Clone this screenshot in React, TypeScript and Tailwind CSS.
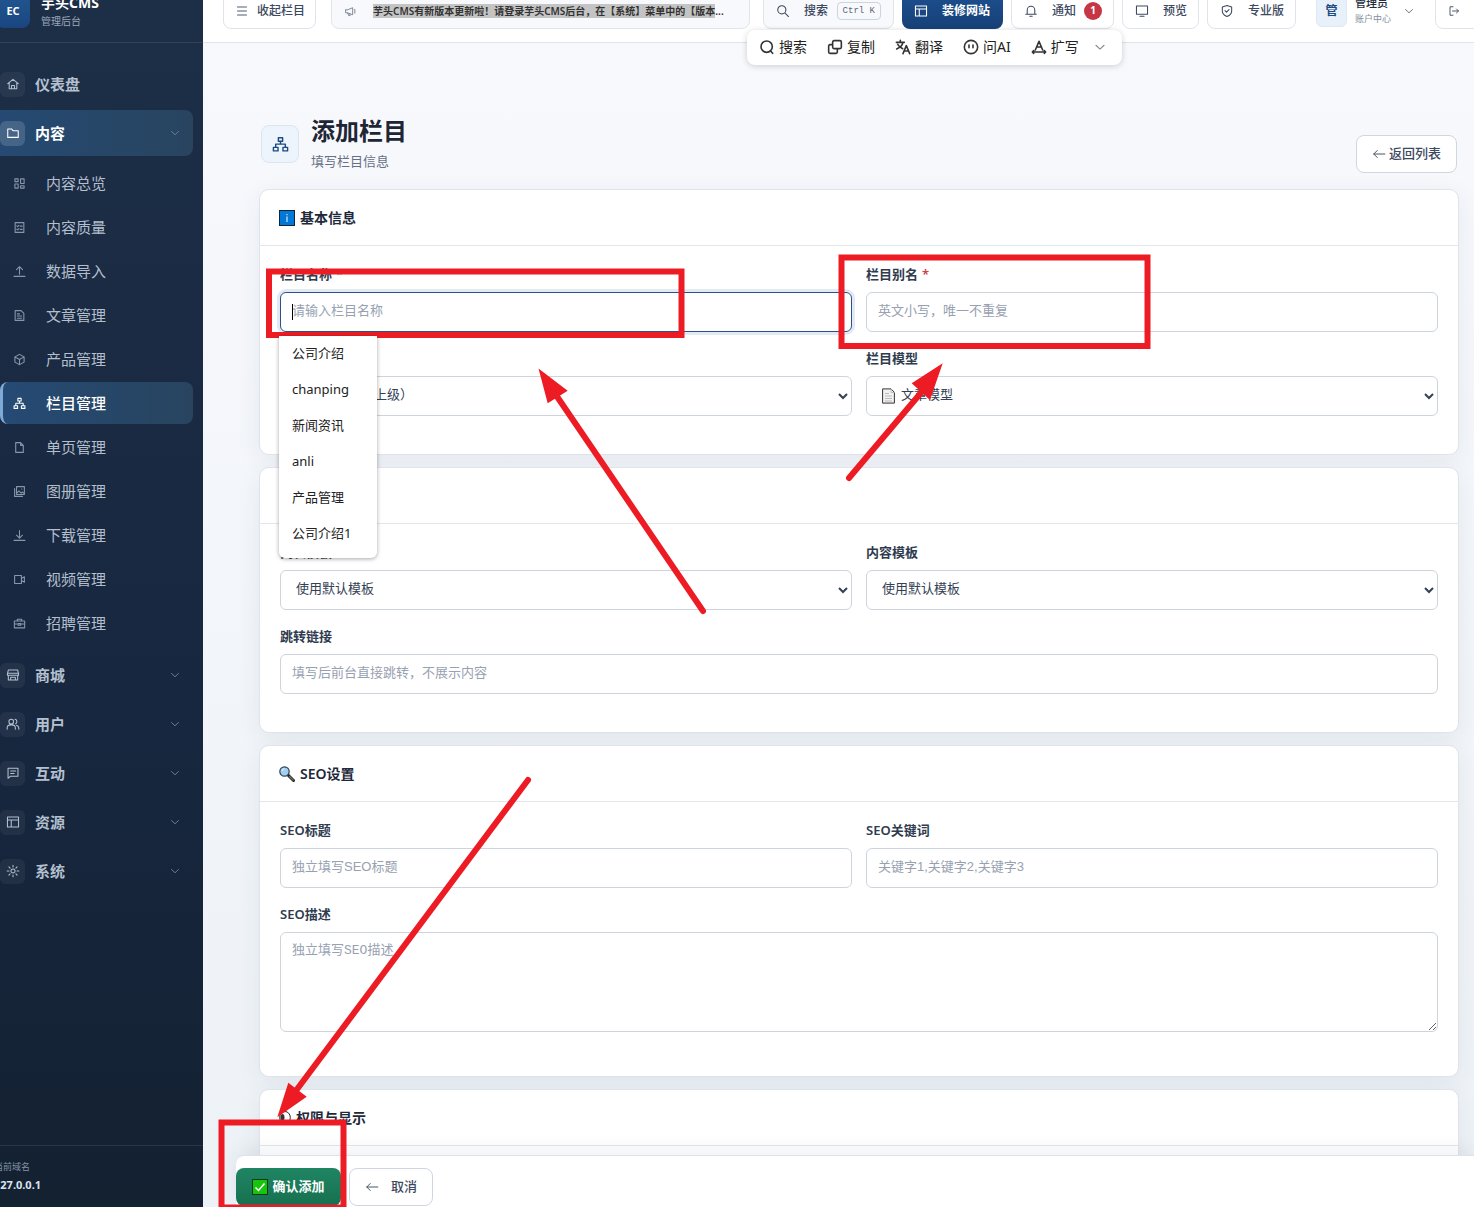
import type { ReactNode } from 'react'

const ICONS = {
  home: 'M3 11.5 12 4l9 7.5M5.5 10v10h13V10M9.500 20v-5.500h5V20',
  folder: 'M3 5h6.500l2.500 3h9v11.500H3z',
  dashboard: 'M3.500 3.500h6v5h-6zM14 3.500h6.500v8.500H14zM3.500 13h6v7.500h-6zM14 16h6.500v4.500H14z',
  quality: 'M4 3h16v18H4zM7 9l1.500 1.500L11 8M7 15l1.500 1.500L11 14M13.500 9.500H17M13.500 15.500H17',
  upload: 'M12 17V3M6.500 8.500 12 3l5.500 5.500M2 21h20',
  article: 'M4 3h11l5 5v13H4zM8 9h4M8 13h8M8 17h8',
  box: 'm12 2.500 8.500 4.700v9.600L12 21.500l-8.500-4.700V7.200zM3.500 7.200 12 12l8.500-4.800M12 12v9.500',
  sitemap: 'M9 2.500h6v5H9zM2 16h6.500v5H2zM15.500 16H22v5h-6.500zM12 7.500v4M5.200 16v-4.500h13.600V16',
  file: 'M5 3h9l5 5v13H5zM14 3v5h5',
  album: 'M6.500 3H21v14.500H6.500zM3 6.500V21h14.500M7 15l4-4 4 4 2-2 4 3M16 7.500h.5',
  download: 'M12 3v14M6.500 11.500 12 17l5.500-5.500M2 21h20',
  video: 'M3 4.500h12.500v15H3zM15.500 10l5.500-3v10l-5.500-3',
  briefcase: 'M2.500 7.500h19V20h-19zM8 7.500V4h8v3.500M2.500 13h7M14.500 13h7M9.500 12h5v3h-5z',
  store: 'M4 3.500h16l1.500 6v3h-19v-3zM4 12.500V20.500h16v-8M2.500 9h19M8 20v-4h8v4',
  users: 'M9 4a4 4 0 1 0 0 8 4 4 0 0 0 0-8M2 21v-2.500c0-3 3-5 7-5s7 2 7 5V21M15.500 4a4 4 0 0 1 1 7.500M18 14c2.500.8 4 2.500 4 5v2',
  message: 'M3.500 4h17v13.500H8l-4.500 3.500zM8 8.500h8.500M8 13h6',
  layout: 'M2.500 3.500h19v17h-19zM2.500 8.500h19M9 8.500v12',
  gear: 'M12 8.500a3.500 3.500 0 1 0 0 7 3.500 3.500 0 0 0 0-7M12 2v3M12 19v3M2 12h3M19 12h3M5 5l2 2M17 17l2 2M19 5l-2 2M7 17l-2 2',
  down: 'm5 9 7 6.500L19 9',
  menu: 'M3 4h18M3 12h18M3 20h18',
  horn: 'M3 9v5.500h3.500L16 18V5L6.500 9zM7 14.500l1.500 5h3l-1-4M20 8v7',
  search: 'M10 3a7 7 0 1 0 0 14 7 7 0 0 0 0-14M15.500 15.500 21.500 21.500',
  bell: 'M5.500 17V10.500a6.500 6.500 0 0 1 13 0V17M3 17.500h18M10 21h4',
  monitor: 'M2.500 3.500h19v14h-19zM8.500 21h7',
  shield: 'm12 2.500 8 2.500v7c0 5-4 8-8 9.500C8 20 4 17 4 12V5zM8.500 11.500l2.500 2.500 4.500-4.500',
  exit: 'M10 3.500H4v17h6M9 12h12M17 8l4 4-4 4',
  left: 'M22 12H3M9 6l-6 6 6 6',
  find: 'M11.500 3a8.500 8.500 0 1 0 0 17 8.500 8.500 0 0 0 0-17M17 17.500l3.500 4',
  copy: 'M10.500 2.500h9a2 2 0 0 1 2 2v8a2 2 0 0 1-2 2h-9a2 2 0 0 1-2-2v-8a2 2 0 0 1 2-2M8.500 8.500h-4a2 2 0 0 0-2 2v9a2 2 0 0 0 2 2h9a2 2 0 0 0 2-2v-5',
  translate: 'M2 5h12M8 2v3M12 5c-1 5-5 8-9.500 10M4 8c2 3.500 4.500 5 7.500 6.500M12 22l5-12 5 12M13.500 18h7',
  ask: 'M12 2a10 10 0 1 0 0 20 10 10 0 0 0 0-20M9 9v4M15 9v4',
  expand: 'm6.500 16.500 5.500-13 5.500 13M9 12h6M2 19.500h20M4 17.500l-2 2 2 2M20 17.500l2 2-2 2',
}

type IconName = keyof typeof ICONS

function Icon({ name, className = 'size-3.5', width = 1.8 }: { name: IconName; className?: string; width?: number }) {
  return (
    <svg viewBox="0 0 24 24" fill="none" stroke="currentColor" strokeWidth={width} strokeLinejoin="round" strokeLinecap="round" className={`shrink-0 ${className}`} aria-hidden="true">
      <path d={ICONS[name]} />
    </svg>
  )
}

const subItems: { icon: IconName; label: string }[] = [
  { icon: 'dashboard', label: '内容总览' },
  { icon: 'quality', label: '内容质量' },
  { icon: 'upload', label: '数据导入' },
  { icon: 'article', label: '文章管理' },
  { icon: 'box', label: '产品管理' },
  { icon: 'sitemap', label: '栏目管理' },
  { icon: 'file', label: '单页管理' },
  { icon: 'album', label: '图册管理' },
  { icon: 'download', label: '下载管理' },
  { icon: 'video', label: '视频管理' },
  { icon: 'briefcase', label: '招聘管理' },
]

const groups: { icon: IconName; label: string }[] = [
  { icon: 'store', label: '商城' },
  { icon: 'users', label: '用户' },
  { icon: 'message', label: '互动' },
  { icon: 'layout', label: '资源' },
  { icon: 'gear', label: '系统' },
]

const suggestions = ['公司介绍', 'chanping', '新闻资讯', 'anli', '产品管理', '公司介绍1']

const tools: { icon: IconName; label: string }[] = [
  { icon: 'find', label: '搜索' },
  { icon: 'copy', label: '复制' },
  { icon: 'translate', label: '翻译' },
  { icon: 'ask', label: '问AI' },
  { icon: 'expand', label: '扩写' },
]

function NavGroup({ icon, label, active, arrow = true }: { icon: IconName; label: string; active?: boolean; arrow?: boolean }) {
  return (
    <a
      href="#"
      className={`flex h-[46px] items-center rounded-lg pr-3 pl-3 text-[15px] font-bold ${active ? 'bg-linear-to-r from-[#254a74] to-[#28445f] text-white' : 'text-[#b4c0cf]'}`}
    >
      <span className={`mr-2.5 flex size-[25px] items-center justify-center rounded-md ${active ? 'bg-white/15' : 'bg-white/5'}`}>
        <Icon name={icon} />
      </span>
      {label}
      {arrow && <Icon name="down" className="ml-auto size-3 text-[#71859d]" />}
    </a>
  )
}

function Sidebar() {
  return (
    <aside className="flex w-[203px] shrink-0 flex-col overflow-hidden bg-linear-to-b from-[#1d2e47] via-[#17273f] via-60% to-[#132131]">
      <div className="-mt-5 flex h-[63px] shrink-0 items-center border-b border-[#31435a]">
        <span className="-ml-1 flex size-[34px] items-center justify-center rounded-lg bg-linear-to-b from-[#215791] to-[#1a4680] text-[11px] font-bold text-white">EC</span>
        <div className="ml-[11px]">
          <div className="text-sm leading-5 font-bold text-white">芋头CMS</div>
          <div className="text-[10px] leading-4 text-[#9aa8ba]">管理后台</div>
        </div>
      </div>
      <nav className="-ml-3 flex flex-1 flex-col pt-[18px] pr-2.5">
        <NavGroup icon="home" label="仪表盘" arrow={false} />
        <div className="mt-[3px]">
          <NavGroup icon="folder" label="内容" active />
        </div>
        <ul className="mt-1.5 mb-2 ml-3 flex flex-col gap-0.5">
          {subItems.map((item) => {
            const active = item.label === '栏目管理'
            return (
              <li key={item.label}>
                <a
                  href="#"
                  className={`flex h-[42px] items-center gap-5 rounded-lg border-l-3 pl-2.5 text-[15px] ${active ? 'border-[#7fa9d6] bg-linear-to-r from-[#254a74] to-[#28445f] font-medium text-white' : 'border-transparent text-[#b3bfcd]'}`}
                >
                  <Icon name={item.icon} className={`size-[13px] ${active ? '' : 'text-[#8797aa]'}`} width={2} />
                  {item.label}
                </a>
              </li>
            )
          })}
        </ul>
        <div className="flex flex-col gap-[3px]">
          {groups.map((g) => (
            <NavGroup key={g.label} icon={g.icon} label={g.label} />
          ))}
        </div>
      </nav>
      <div className="h-[62px] shrink-0 border-t border-[#26374a] pt-[13px]">
        <div className="-ml-1.5">
          <div className="text-[9px] leading-4 text-[#8292a5]">当前域名</div>
          <div className="text-[11px] leading-5 font-bold text-[#dce4ee]">127.0.0.1</div>
        </div>
      </div>
    </aside>
  )
}

const topButton = 'flex h-9 shrink-0 items-center whitespace-nowrap rounded-lg border border-[#dfe3ea] px-3 text-xs font-medium text-[#3c4960]'

function TopBar() {
  return (
    <header className="-mt-5 flex h-[63px] shrink-0 items-center overflow-hidden border-b border-[#dfe3ea] bg-white pl-5">
      <button className={`${topButton} gap-[9px] pr-2.5`}>
        <Icon name="menu" className="size-3" />
        收起栏目
      </button>
      <div className="mr-[13px] ml-[15px] flex h-9 min-w-0 flex-1 items-center rounded-lg border border-[#e1e5eb] bg-[#f8f9fc] pr-3 pl-3">
        <Icon name="horn" className="mr-4 size-[13px] text-[#7d8795]" />
        <p className="truncate text-[10px] leading-4 font-semibold text-[#333]">
          <span className="bg-[#c4c4c4]">芋头CMS有新版本更新啦！请登录芋头CMS后台，在【系统】菜单中的【版本</span>...
        </p>
      </div>
      <div className="flex shrink-0 items-center gap-2">
        <button className={`${topButton} w-[131px] bg-[#f8f9fc]`}>
          <Icon name="search" className="size-3.5" />
          <span className="ml-[14px]">搜索</span>
          <kbd className="ml-auto rounded border border-[#ccd4df] px-[5px] font-['Liberation_Mono',monospace] text-[9px] leading-4 text-[#5d6a7e]">Ctrl K</kbd>
        </button>
        <button className="flex h-9 w-[101px] items-center gap-[14px] rounded-lg bg-linear-to-b from-[#1d4f8f] to-[#174077] px-3 text-xs font-bold whitespace-nowrap text-white">
          <Icon name="layout" />
          装修网站
        </button>
        <button className={`${topButton} w-[103px]`}>
          <Icon name="bell" />
          <span className="ml-[14px]">通知</span>
          <span className="ml-2 flex size-[18px] shrink-0 items-center justify-center rounded-full bg-[#c53744] text-[10px] font-bold text-white">1</span>
        </button>
        <button className={`${topButton} w-[77px] gap-[14px]`}>
          <Icon name="monitor" />
          预览
        </button>
        <button className={`${topButton} w-[89px] gap-[14px]`}>
          <Icon name="shield" />
          专业版
        </button>
        <button className="flex w-[123px] items-center pl-3 text-left">
          <span className="flex size-[31px] items-center justify-center rounded-md border border-[#dce8f4] bg-[#e8f1fa] text-xs font-bold text-[#1c4a82]">管</span>
          <span className="ml-2">
            <span className="block text-[11px] leading-4 font-medium text-[#222c3b]">管理员</span>
            <span className="block text-[9px] leading-4 text-[#8690a0]">账户中心</span>
          </span>
          <Icon name="down" className="ml-3 size-3 text-[#5d6878]" />
        </button>
        <button aria-label="退出" className={`${topButton} -mr-3 w-[51px]`}>
          <Icon name="exit" className="size-3" />
        </button>
      </div>
    </header>
  )
}

function Card({ icon, title, children }: { icon: ReactNode; title: string; children?: ReactNode }) {
  return (
    <section className="rounded-[10px] border border-[#e0e4ea] bg-white shadow-[0_6px_24px_rgba(30,50,80,0.07)]">
      <h2 className="flex h-14 items-center gap-[5px] border-b border-[#e3e6eb] px-[19px] text-sm font-semibold text-[#1e293b]">
        {icon}
        {title}
      </h2>
      <div className="grid grid-cols-2 gap-x-3.5 gap-y-4 px-5 pt-[18px] pb-[38px]">{children}</div>
    </section>
  )
}

const control = "block h-10 w-full rounded-md border border-[#ced4dc] bg-white px-[11px] pb-1 font-['Liberation_Sans','Noto_Sans_CJK_SC',sans-serif] text-[13px] text-[#334155] placeholder:text-[#97a1b1]"

function Field({ id, label, required, wide, children }: { id: string; label: string; required?: boolean; wide?: boolean; children: ReactNode }) {
  return (
    <div className={wide ? 'col-span-2' : ''}>
      <label htmlFor={id} className="mb-2 block h-5 text-[13px] leading-5 font-semibold text-[#2f3b4e]">
        {label}
        {required && <span className="ml-1 text-[#d0404a]">*</span>}
      </label>
      {children}
    </div>
  )
}

function InfoIcon() {
  return (
    <svg viewBox="0 0 16 16" className="size-4 shrink-0" aria-hidden="true">
      <rect x=".5" y=".5" width="15" height="15" fill="#0078d7" stroke="#12243a" />
      <path d="M8 6.500v5.500M8 4v1.200" stroke="#fff" />
    </svg>
  )
}

function PaletteIcon() {
  return (
    <svg viewBox="0 0 16 16" className="size-4 shrink-0" aria-hidden="true">
      <circle cx="8" cy="8" r="7" fill="#e9b872" stroke="#333" />
      <circle cx="5" cy="6" r="1.300" fill="#e81224" />
      <circle cx="10" cy="5" r="1.300" fill="#0078d7" />
    </svg>
  )
}

function MagnifierIcon() {
  return (
    <svg viewBox="0 0 16 16" className="size-4 shrink-0" aria-hidden="true">
      <path d="m9 9 5.500 5.500" stroke="#222" strokeWidth="3" strokeLinecap="round" />
      <path d="m10.500 10.500 3.700 3.700" stroke="#777" strokeWidth="1.200" strokeLinecap="round" />
      <circle cx="5.500" cy="5.500" r="4.700" fill="#9fd0f2" stroke="#33414f" strokeWidth="1.200" />
      <path d="M3 5a2.500 2.500 0 0 1 2.500-2.200" stroke="#e4f4ff" fill="none" />
    </svg>
  )
}

function EyeIcon() {
  return (
    <svg viewBox="0 0 12 16" className="h-4 w-3 shrink-0" aria-hidden="true">
      <ellipse cx="6" cy="7.500" rx="5.300" ry="6" fill="#fff" stroke="#222" />
      <ellipse cx="3.500" cy="7.500" rx="2" ry="3.500" fill="#333" />
    </svg>
  )
}

function PageIcon() {
  return (
    <svg viewBox="0 0 13 16" className="pointer-events-none absolute top-3 left-4 h-4 w-[13px]" aria-hidden="true">
      <path d="M.6.900h8.400l3.400 3.400v10.800H.6z" fill="#f2f2f2" stroke="#333" />
      <path d="M9 1v3.500h3.400M3 5.500h4M3 8h7M3 10.500h7M3 13h7" stroke="#bbb" fill="none" />
    </svg>
  )
}

function CheckIcon() {
  return (
    <svg viewBox="0 0 16 16" className="size-4 shrink-0" aria-hidden="true">
      <rect x=".5" y=".5" width="15" height="15" fill="#16c60c" stroke="#10361c" />
      <path d="m3.500 8.500 3 3 6-7" stroke="#fff" strokeWidth="1.500" fill="none" />
    </svg>
  )
}

function FloatingTools() {
  return (
    <div className="absolute top-[30px] left-[747px] flex h-[35px] w-[375px] items-center gap-5 rounded-lg bg-white pb-0.5 pl-3 text-sm text-[#222] shadow-[0_1px_6px_rgba(0,0,0,0.18)]">
      {tools.map((t) => (
        <button key={t.label} className="flex shrink-0 items-center gap-1">
          <Icon name={t.icon} className="size-4 text-[#333]" width={2.4} />
          {t.label}
        </button>
      ))}
      <button aria-label="更多" className="-ml-1.5">
        <Icon name="down" className="size-3.5 text-[#888]" />
      </button>
    </div>
  )
}

// Red boxes and arrows of the tutorial
function Annotations() {
  return (
    <svg className="pointer-events-none absolute inset-0 size-full" fill="none" stroke="#ed1c24" strokeWidth="6" strokeLinecap="round" aria-hidden="true">
      <rect x="269" y="271.500" width="412.500" height="63.500" strokeLinecap="butt" />
      <rect x="841.500" y="257.500" width="306" height="88.500" />
      <rect x="221.500" y="1122.500" width="122" height="85" />
      <path d="M703 611 556 395M849 478l76-90M528 780 295 1092" />
      <path d="m538.500 368.500 29.200 22.200-20 12.600zM942.700 363.300l-31 20 18.300 16.700zM277.300 1117.300l11-34.600 18.400 14z" fill="#ed1c24" stroke="none" />
    </svg>
  )
}

export default function App() {
  return (
    <div className="relative flex h-screen overflow-hidden bg-[#f7f8fc] font-['Noto_Sans','Noto_Sans_CJK_SC',sans-serif]">
      <Sidebar />
      <div className="relative flex min-w-0 flex-1 flex-col overflow-hidden bg-linear-to-b from-[#f8f9fd] to-[#edf2f6]">
        <TopBar />
        <main className="min-h-0 flex-1 overflow-hidden pt-[70px] pr-[15px] pl-14">
          <div className="mb-4 flex items-end justify-between px-0.5">
            <div className="flex items-center">
              <span className="mt-0.5 mr-3 flex size-[38px] items-center justify-center rounded-lg border border-[#dbe5f0] bg-[#edf4fb] text-[#1c4a82]">
                <Icon name="sitemap" className="size-[17px]" width={2} />
              </span>
              <div>
                <h1 className="text-2xl leading-9 font-bold text-[#1e2635]">添加栏目</h1>
                <p className="text-[13px] leading-6 text-[#667085]">填写栏目信息</p>
              </div>
            </div>
            <button className="flex h-[38px] items-center gap-[3px] rounded-lg border border-[#d0d6df] bg-white px-[15px] text-[13px] font-medium text-[#3c4960]">
              <Icon name="left" className="size-3.5" width={1.6} />
              返回列表
            </button>
          </div>

          <form className="flex flex-col gap-3">
            <Card icon={<InfoIcon />} title="基本信息">
              <Field id="name" label="栏目名称" required>
                <div className="relative">
                  <input id="name" autoComplete="off" placeholder="请输入栏目名称" className={`${control} border-[#2b5288]! shadow-[0_0_0_3px_#e2ebf5]`} />
                  <span className="absolute top-3 left-3 h-4 w-px bg-black" />
                  <ul className="absolute top-full -left-px z-10 mt-1 w-[98px] rounded-b-md bg-white pb-1.5 text-[13px] text-[#222] shadow-[0_1px_4px_rgba(0,0,0,0.35)]">
                    {suggestions.map((s) => (
                      <li key={s} className="flex h-9 items-center pl-[13px]">{s}</li>
                    ))}
                  </ul>
                </div>
              </Field>
              <Field id="alias" label="栏目别名" required>
                <input id="alias" placeholder="英文小写，唯一不重复" className={control} />
              </Field>
              <Field id="parent" label="上级栏目">
                <select id="parent" className={control}>
                  <option>顶级栏目（无上级）</option>
                </select>
              </Field>
              <Field id="model" label="栏目模型">
                <div className="relative">
                  <select id="model" className={`${control} pl-[30px]`}>
                    <option>文章模型</option>
                  </select>
                  <PageIcon />
                </div>
              </Field>
            </Card>

            <Card icon={<PaletteIcon />} title="模板设置">
              <Field id="list-tpl" label="列表模板">
                <select id="list-tpl" className={control}>
                  <option>使用默认模板</option>
                </select>
              </Field>
              <Field id="content-tpl" label="内容模板">
                <select id="content-tpl" className={control}>
                  <option>使用默认模板</option>
                </select>
              </Field>
              <Field id="link" label="跳转链接" wide>
                <input id="link" placeholder="填写后前台直接跳转，不展示内容" className={control} />
              </Field>
            </Card>

            <Card icon={<MagnifierIcon />} title="SEO设置">
              <Field id="seo-title" label="SEO标题">
                <input id="seo-title" placeholder="独立填写SEO标题" className={control} />
              </Field>
              <Field id="seo-keys" label="SEO关键词">
                <input id="seo-keys" placeholder="关键字1,关键字2,关键字3" className={control} />
              </Field>
              <Field id="seo-desc" label="SEO描述" wide>
                <textarea
                  id="seo-desc"
                  placeholder="独立填写SEO描述"
                  className="mb-1.5 block h-[100px] w-full rounded-md border border-[#ced4dc] bg-white px-[11px] py-2 font-['Liberation_Mono','Noto_Sans_CJK_SC',monospace] text-[13px] leading-5 placeholder:text-[#97a1b1]"
                />
              </Field>
            </Card>

            <Card icon={<EyeIcon />} title="权限与显示" />
          </form>
        </main>

        <div className="absolute right-0 bottom-0 left-[33px] flex h-[52px] items-start gap-2 rounded-tl-lg border-t border-[#dfe3e9] bg-white pt-3 shadow-[0_-4px_20px_rgba(30,50,80,0.08)]">
          <button className="flex h-[38px] w-[105px] items-center justify-center gap-1 rounded-lg bg-linear-to-b from-[#1f8563] to-[#17704f] text-[13px] font-bold text-white">
            <CheckIcon />
            确认添加
          </button>
          <button className="flex h-[38px] w-[84px] items-center rounded-lg border border-[#d0d6df] bg-white px-[15px] text-[13px] font-medium text-[#3c4960]">
            <Icon name="left" className="mr-3 size-3.5" width={1.6} />
            取消
          </button>
        </div>
      </div>
      <FloatingTools />
      <Annotations />
    </div>
  )
}
